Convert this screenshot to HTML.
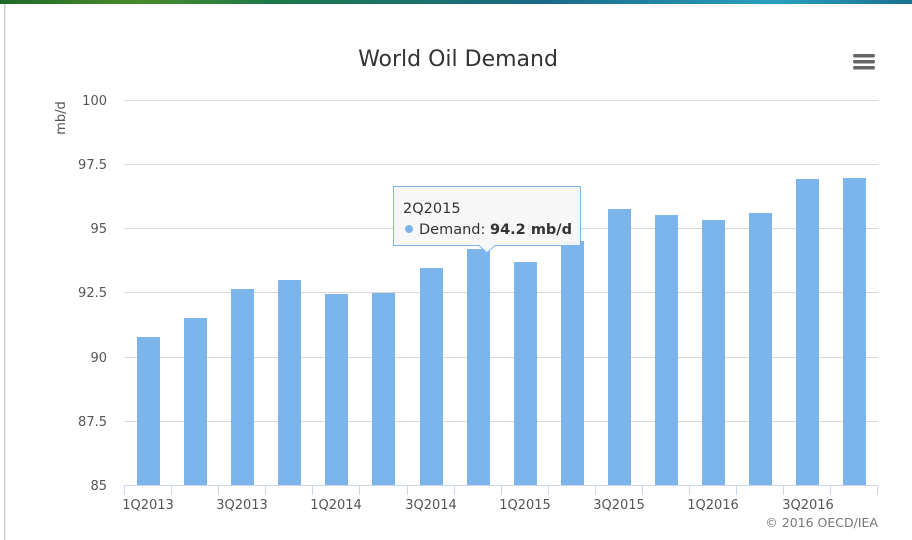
<!DOCTYPE html>
<html><head><meta charset="utf-8"><style>
html,body{margin:0;padding:0;background:#fff;width:912px;height:540px;overflow:hidden}
svg{display:block;font-family:"DejaVu Sans","Liberation Sans",sans-serif}
</style></head><body>
<svg width="912" height="540" viewBox="0 0 912 540" xmlns="http://www.w3.org/2000/svg">
<defs>
<linearGradient id="g" x1="0" x2="1" y1="0" y2="0">
<stop offset="0" stop-color="#1e6a2a"/><stop offset="0.15" stop-color="#4a8a2a"/><stop offset="0.3" stop-color="#1c7a4a"/><stop offset="0.6" stop-color="#1a6a8a"/><stop offset="0.85" stop-color="#2aa0c0"/><stop offset="1" stop-color="#1a7090"/>
</linearGradient>
</defs>
<rect x="0" y="0" width="912" height="4" fill="url(#g)"/>
<rect x="4" y="4" width="1.5" height="536" fill="#d0d0d0"/>
<text x="458" y="66" text-anchor="middle" font-size="22" fill="#333">World Oil Demand</text>
<g fill="#666"><rect x="853" y="54" width="22" height="3.5" rx="1.7"/><rect x="853" y="60" width="22" height="3.5" rx="1.7"/><rect x="853" y="66" width="22" height="3.5" rx="1.7"/></g>
<g stroke="#d8d8d8" stroke-width="1">
<line x1="124" x2="878" y1="100.5" y2="100.5"/><line x1="124" x2="878" y1="164.5" y2="164.5"/><line x1="124" x2="878" y1="228.5" y2="228.5"/><line x1="124" x2="878" y1="292.5" y2="292.5"/><line x1="124" x2="878" y1="357.5" y2="357.5"/><line x1="124" x2="878" y1="421.5" y2="421.5"/>
</g>
<g font-size="13" fill="#555" text-anchor="end">
<text x="107" y="105">100</text><text x="107" y="169">97.5</text><text x="107" y="233">95</text><text x="107" y="297">92.5</text><text x="107" y="362">90</text><text x="107" y="426">87.5</text><text x="107" y="490">85</text>
</g>
<text transform="translate(65,118) rotate(-90)" text-anchor="middle" font-size="13" fill="#555">mb/d</text>
<g fill="#7cb5ec">
<rect x="137" y="337" width="23" height="148"/>
<rect x="184" y="318" width="23" height="167"/>
<rect x="231" y="289" width="23" height="196"/>
<rect x="278" y="280" width="23" height="205"/>
<rect x="325" y="294" width="23" height="191"/>
<rect x="372" y="293" width="23" height="192"/>
<rect x="420" y="268" width="23" height="217"/>
<rect x="467" y="249" width="23" height="236"/>
<rect x="514" y="262" width="23" height="223"/>
<rect x="561" y="241" width="23" height="244"/>
<rect x="608" y="209" width="23" height="276"/>
<rect x="655" y="215" width="23" height="270"/>
<rect x="702" y="220" width="23" height="265"/>
<rect x="749" y="213" width="23" height="272"/>
<rect x="796" y="179" width="23" height="306"/>
<rect x="843" y="178" width="23" height="307"/>
</g>
<g stroke="#ccd6eb" stroke-width="1">
<line x1="124" x2="878" y1="485.5" y2="485.5"/>
<line x1="124.5" x2="124.5" y1="485" y2="495"/><line x1="171.5" x2="171.5" y1="485" y2="495"/><line x1="218.5" x2="218.5" y1="485" y2="495"/><line x1="265.5" x2="265.5" y1="485" y2="495"/><line x1="312.5" x2="312.5" y1="485" y2="495"/><line x1="359.5" x2="359.5" y1="485" y2="495"/><line x1="407.5" x2="407.5" y1="485" y2="495"/><line x1="454.5" x2="454.5" y1="485" y2="495"/><line x1="501.5" x2="501.5" y1="485" y2="495"/><line x1="548.5" x2="548.5" y1="485" y2="495"/><line x1="595.5" x2="595.5" y1="485" y2="495"/><line x1="642.5" x2="642.5" y1="485" y2="495"/><line x1="689.5" x2="689.5" y1="485" y2="495"/><line x1="736.5" x2="736.5" y1="485" y2="495"/><line x1="783.5" x2="783.5" y1="485" y2="495"/><line x1="830.5" x2="830.5" y1="485" y2="495"/><line x1="877.5" x2="877.5" y1="485" y2="495"/>
</g>
<g font-size="13" fill="#555" text-anchor="middle">
<text x="148" y="509">1Q2013</text><text x="242" y="509">3Q2013</text><text x="336" y="509">1Q2014</text><text x="431" y="509">3Q2014</text><text x="525" y="509">1Q2015</text><text x="619" y="509">3Q2015</text><text x="713" y="509">1Q2016</text><text x="808" y="509">3Q2016</text>
</g>
<text x="878" y="527" text-anchor="end" font-size="12.5" fill="#777">© 2016 OECD/IEA</text>
<g>
<path d="M393.5 186.5 H580.5 V245.5 H495 L487 253 L479 245.5 H393.5 Z" fill="#f7f7f7" fill-opacity="0.95" stroke="#7cb5ec" stroke-width="1"/>
<text x="403" y="213" font-size="14.5" fill="#333">2Q2015</text>
<circle cx="409" cy="229" r="4" fill="#7cb5ec"/>
<text x="419" y="234" font-size="14.5" fill="#333">Demand: <tspan font-weight="bold">94.2 mb/d</tspan></text>
</g>
</svg>
</body></html>
